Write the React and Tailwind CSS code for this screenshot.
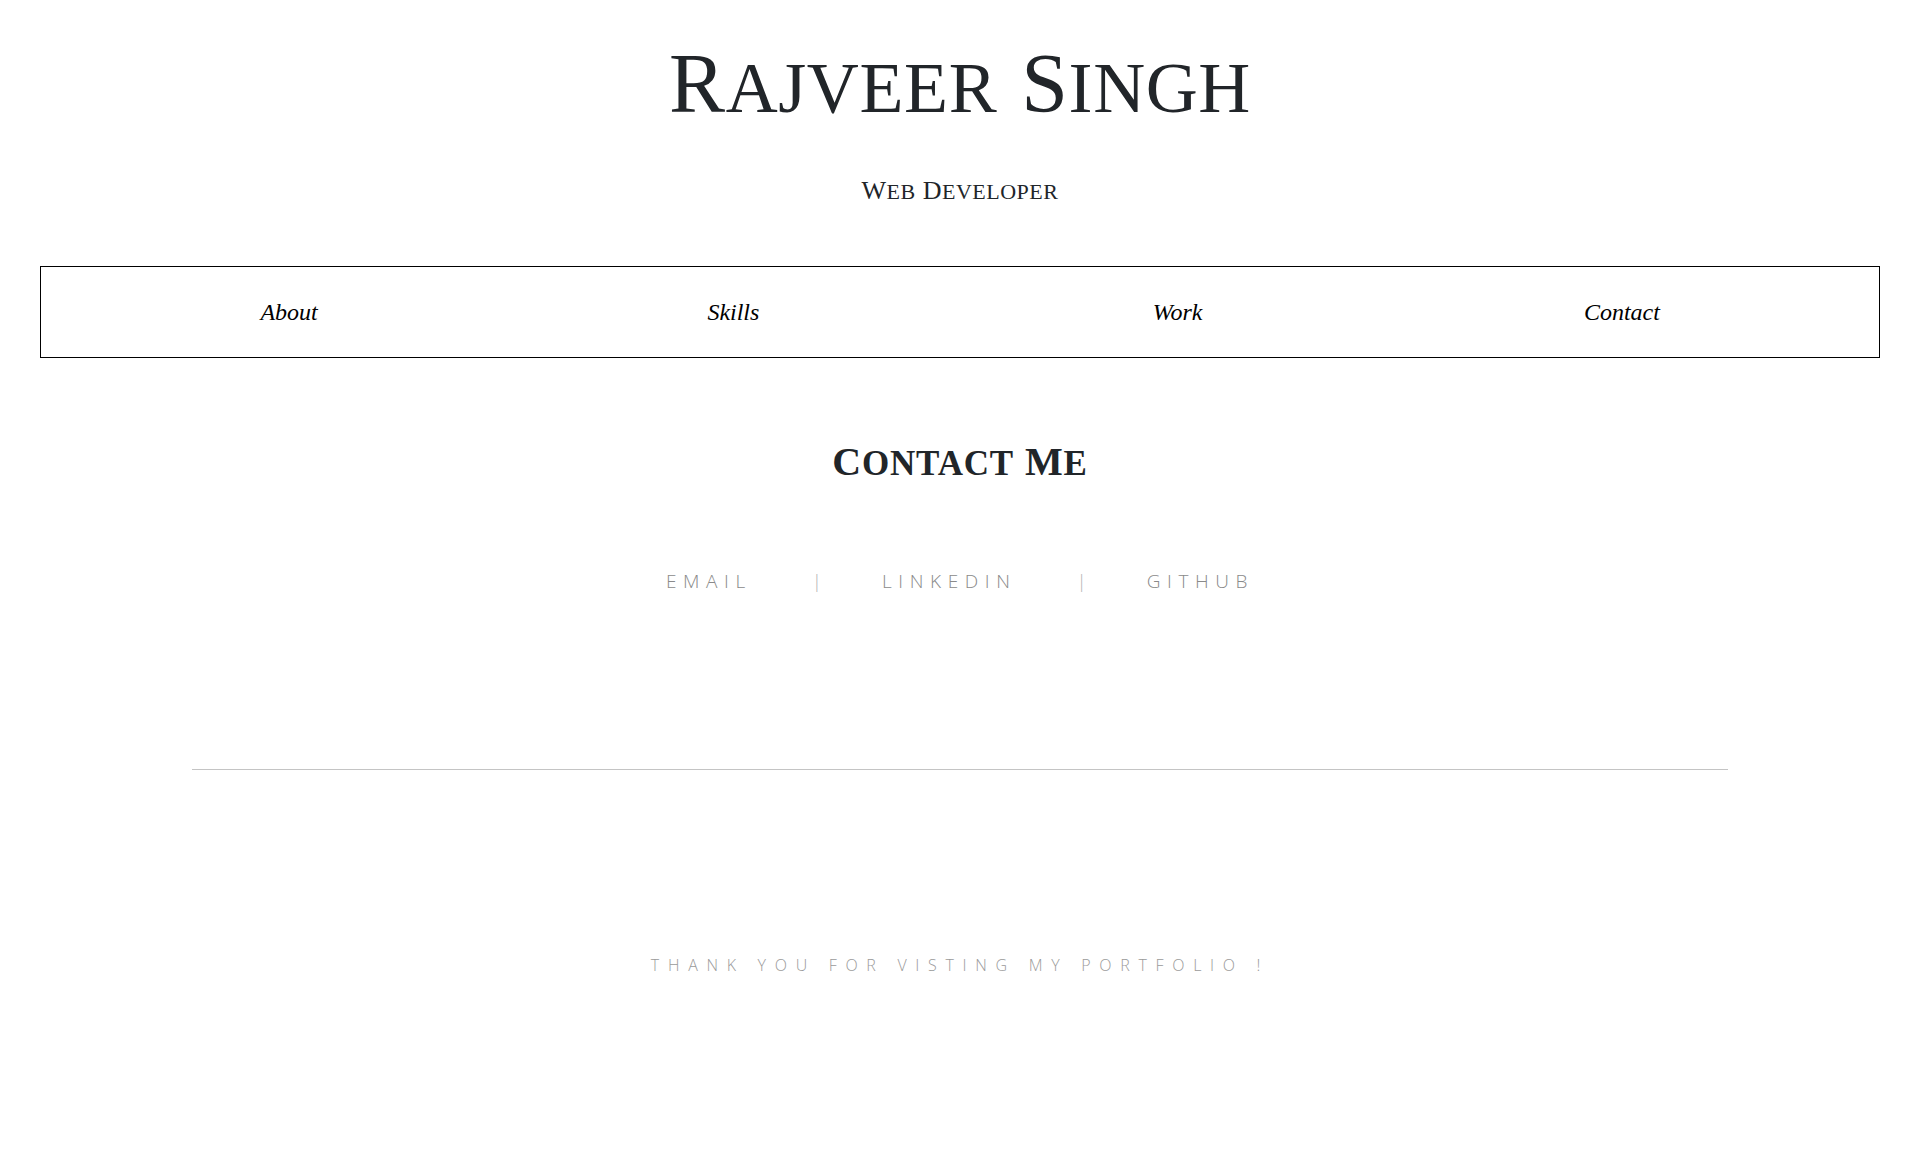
import React from 'react';

const navItems = ['About', 'Skills', 'Work', 'Contact'];
const links = ['Email', 'LinkedIn', 'GitHub'];

function SmallCaps({ text, big, small, gap }) {
  // first letter of each word large, the rest as small capitals
  return (
    <>
      {text.split(' ').map((word, i) => (
        <span key={i} className={i > 0 ? gap : ''}>
          <span className={big}>{word[0]}</span>
          <span className={`uppercase ${small}`}>{word.slice(1)}</span>
        </span>
      ))}
    </>
  );
}

export default function App() {
  return (
    <div className="min-h-[1159px] bg-white text-[#212529] font-['Liberation_Serif',serif]">
      <header className="pt-[42px] text-center">
        <h1 className="leading-none font-normal tracking-[0.6px]">
          <SmallCaps text="Rajveer Singh" big="text-[84px]" small="text-[72px]" gap="ml-[24px]" />
        </h1>
        <p className="mt-[52px] leading-none tracking-[0.5px]">
          <SmallCaps text="Web Developer" big="text-[26px]" small="text-[22px]" gap="ml-[7px]" />
        </p>
      </header>

      <nav className="mx-10 mt-[62px] h-[92px] border border-black">
        <ul className="grid h-full grid-cols-4 items-center pl-[26px] pr-[35px]">
          {navItems.map(item => (
            <li key={item} className="text-center">
              <a href="#" className="text-[24px] italic text-black">{item}</a>
            </li>
          ))}
        </ul>
      </nav>

      <section className="mt-[84px] text-center">
        <h2 className="leading-none font-bold tracking-[0.8px]">
          <SmallCaps text="Contact Me" big="text-[40px]" small="text-[35px]" gap="ml-[11px]" />
        </h2>
        <div className="mt-[90px] flex items-center justify-center gap-[60px] font-['Open_Sans',sans-serif] text-[19px] font-light leading-none text-[#8a8a8a]">
          {links.map((l, i) => (
            <React.Fragment key={l}>
              {i > 0 && <span className="text-[#b5b5b5]">|</span>}
              <a href="#" className="uppercase tracking-[6.6px]">{l}</a>
            </React.Fragment>
          ))}
        </div>
      </section>

      <hr className="mx-auto mt-[178px] w-[80%] border-t border-[#c4c4c4]" />

      <footer className="mt-[187px] text-center font-['Open_Sans',sans-serif] text-[16px] font-light leading-none tracking-[8.7px] text-[#9a9a9a]">
        THANK YOU FOR VISTING MY PORTFOLIO !
      </footer>
    </div>
  );
}
